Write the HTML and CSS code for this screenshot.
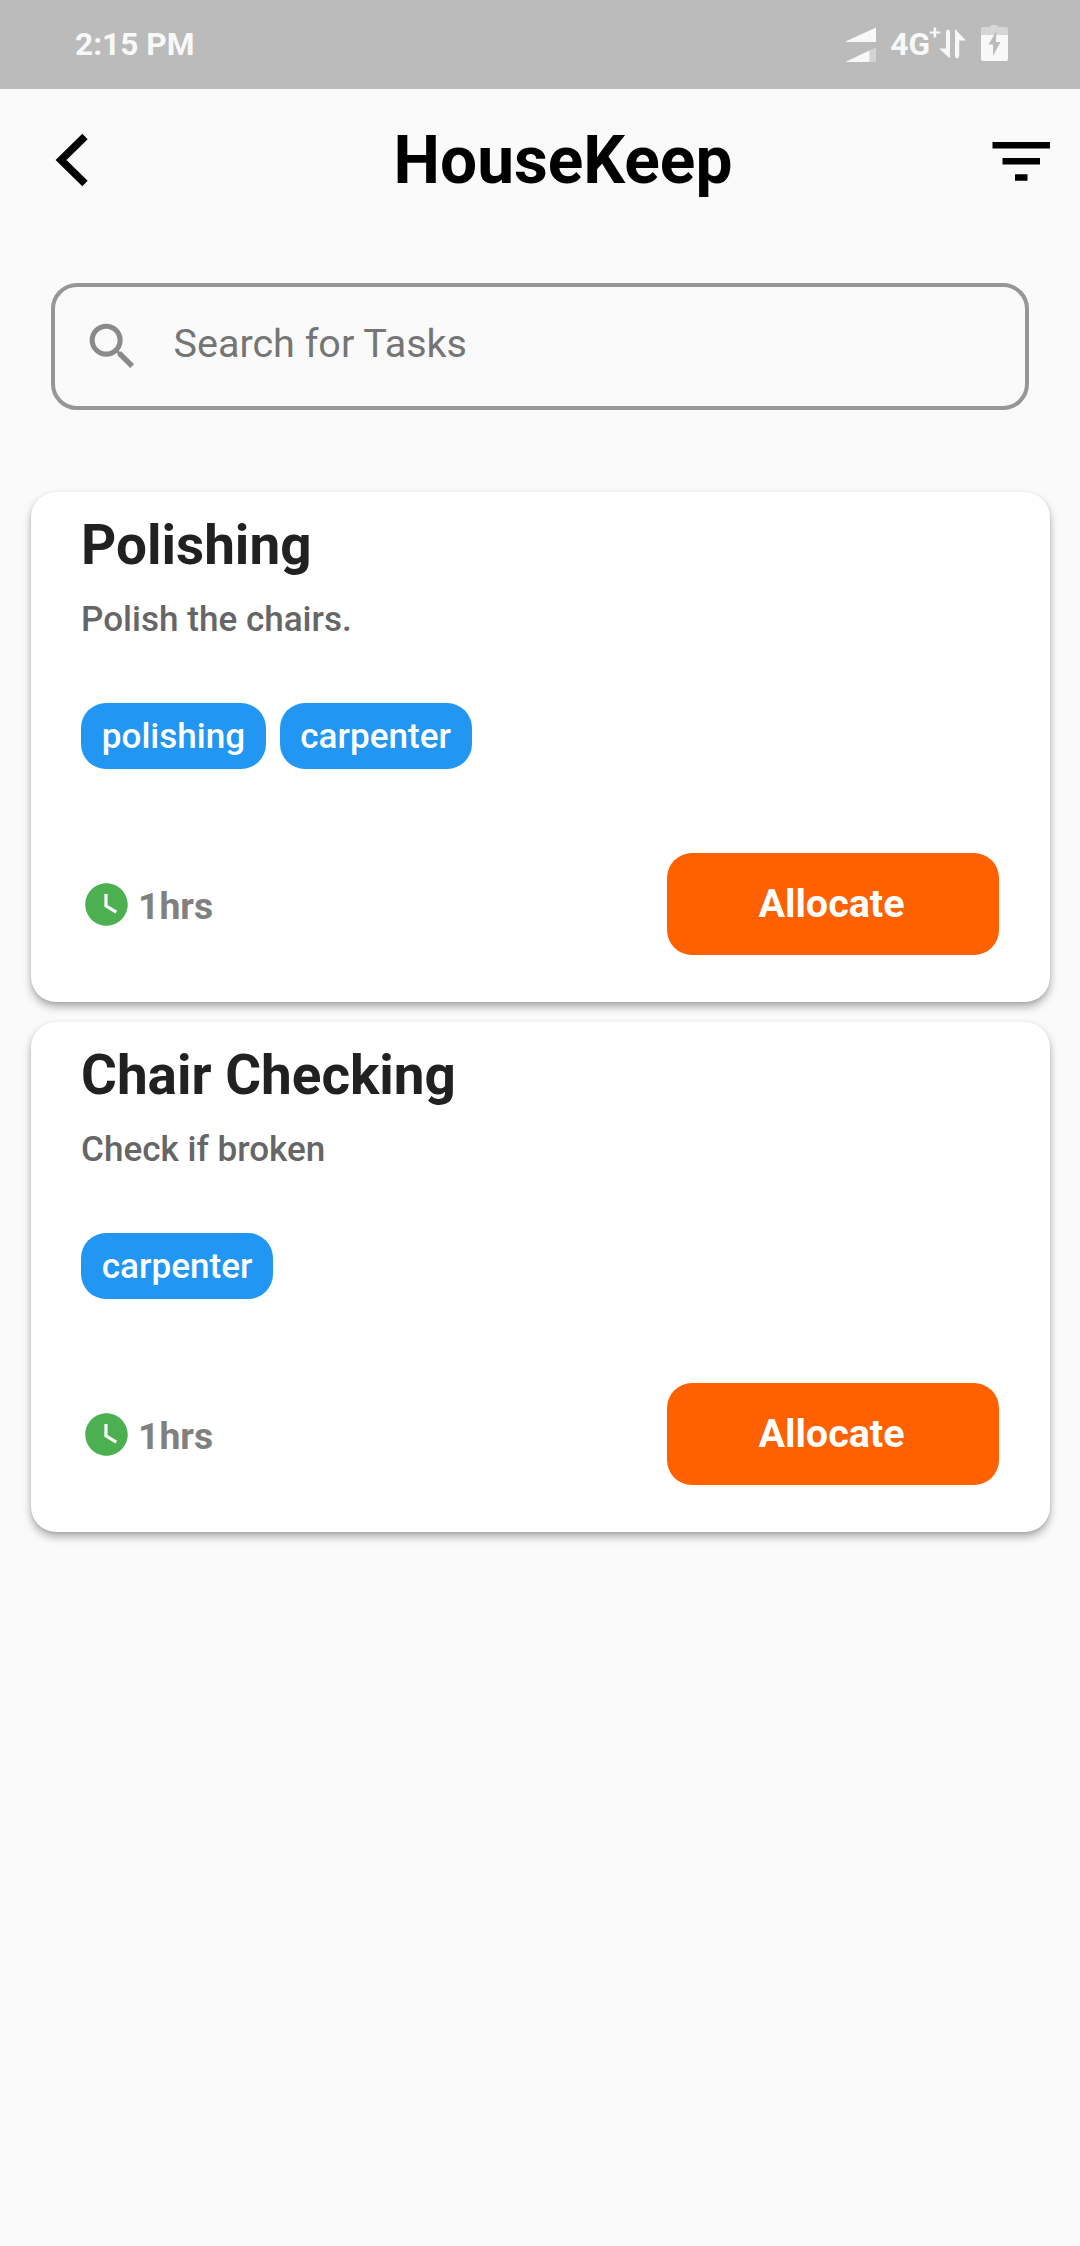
FILE: index.html
```html
<!DOCTYPE html>
<html lang="en">
<head>
<meta charset="utf-8">
<title>HouseKeep</title>
<link rel="stylesheet" href="styles.css">
</head>
<body>
<div class="status-bar">
  <span class="status-time">2:15 PM</span>
  <div class="status-icons">
    <svg class="signal" width="31" height="36" viewBox="0 0 31 36">
      <path d="M0 14.2 30 .5V15H0z"/>
      <path d="M0 34.7 30 20.5V35H0z" opacity=".4"/>
      <path d="M0 34.7 23.5 23.6V35H0z"/>
    </svg>
    <span class="network">4G</span>
    <svg class="data" width="38" height="36" viewBox="0 0 38 36">
      <path d="M4.600.5h2.600v4h4v2h-4v4H4.600v-4H.800v-2h3.800z"/>
      <path d="M17 5.500q0-3 2-3t2 3v26L10 21.500h7z"/>
      <path d="M26 2 37 13.500H30.200V28q0 3.500-2.100 3.500T26 28z"/>
    </svg>
    <svg class="battery" width="27" height="36" viewBox="0 0 27 36">
      <path d="M9 2q0-2 2-2h4q2 0 2 2h8q2 0 2 2v6H0V4q0-2 2-2z" opacity=".45"/>
      <path d="M0 10h27v24q0 2-2 2H2q-2 0-2-2z"/>
      <path class="bolt" d="M15.500 6 7.500 19.500H12V31L19.500 17H15z"/>
    </svg>
  </div>
</div>
<header class="app-bar">
  <svg class="back" width="34" height="54" viewBox="0 0 34 54"><path d="M30 3.500 6 27 30 50.500"/></svg>
  <h1 class="app-title">HouseKeep</h1>
  <svg class="filter" width="58" height="39" viewBox="0 0 58 39"><path d="M.5 0H58v6.600H.500zM10.500 16H48v6.600H10.500zM23 32.200h12.500v6.600H23z"/></svg>
</header>
<main class="content">
  <div class="search">
    <svg class="search-icon" width="61" height="61" viewBox="0 0 24 24"><path d="M15.500 14h-.79l-.28-.27A6.471 6.471 0 0 0 16 9.500 6.500 6.500 0 1 0 9.500 16c1.610 0 3.090-.59 4.230-1.570l.27.28v.79l5 4.990L20.490 19l-4.990-5zm-6 0C7.010 14 5 11.990 5 9.500S7.010 5 9.500 5 14 7.010 14 9.500 11.990 14 9.500 14z"/></svg>
    <span class="search-hint">Search for Tasks</span>
  </div>
  <section class="card">
    <h2 class="card-title">Polishing</h2>
    <p class="card-text">Polish the chairs.</p>
    <div class="chips"><span class="chip">polishing</span><span class="chip">carpenter</span></div>
    <div class="card-footer">
      <div class="duration">
        <svg width="51" height="51" viewBox="0 0 24 24"><path d="M12 2C6.500 2 2 6.500 2 12s4.500 10 10 10 10-4.500 10-10S17.500 2 12 2zm4.200 14.200L11 13V7h1.500v5.200l4.500 2.700-.8 1.300z"/></svg>
        <span class="hours">1hrs</span>
      </div>
      <button class="allocate">Allocate</button>
    </div>
  </section>
  <section class="card">
    <h2 class="card-title">Chair Checking</h2>
    <p class="card-text">Check if broken</p>
    <div class="chips"><span class="chip">carpenter</span></div>
    <div class="card-footer">
      <div class="duration">
        <svg width="51" height="51" viewBox="0 0 24 24"><path d="M12 2C6.500 2 2 6.500 2 12s4.500 10 10 10 10-4.500 10-10S17.500 2 12 2zm4.200 14.200L11 13V7h1.500v5.200l4.500 2.700-.8 1.300z"/></svg>
        <span class="hours">1hrs</span>
      </div>
      <button class="allocate">Allocate</button>
    </div>
  </section>
</main>
</body>
</html>
```
FILE: styles.css
```css
* { box-sizing: border-box; }
body {
  margin: 0;
  min-height: 2246px;
  background: #fafafa;
  font-family: Roboto, "Liberation Sans", sans-serif;
}
h1, h2, p { margin: 0; }
svg { display: block; flex: none; }

.status-bar {
  display: flex;
  align-items: center;
  justify-content: space-between;
  height: 89px;
  padding: 0 72px 0 75px;
  background: #bbb;
  color: #f8f8f8;
  fill: #f8f8f8;
  font-size: 31.700px;
  font-weight: 700;
  line-height: 38px;
}
.status-time { padding-top: 1px; }
.status-icons { display: flex; align-items: center; }
.network { margin-left: 13px; padding-top: 1px; }
.data { margin-left: -1px; }
.battery { margin-left: 14px; margin-top: -3px; }
.bolt { fill: #bbb; }

.app-bar {
  display: flex;
  align-items: center;
  height: 142px;
  padding: 0 30px 0 55px;
}
.back { fill: none; stroke: #000; stroke-width: 7.600px; }
.app-title {
  flex: 1;
  padding: 2px 0 0 45px;
  text-align: center;
  font-size: 65.800px;
  font-weight: 700;
  line-height: 78px;
  color: #000;
}
.filter { margin-top: 2px; }

.content {
  display: flex;
  flex-direction: column;
  gap: 20px;
  padding: 52px 30.500px 0;
}
.search {
  display: flex;
  align-items: center;
  gap: 31px;
  height: 127px;
  margin: 0 20.500px 62px;
  padding-left: 26.500px;
  border: 4px solid #969696;
  border-radius: 26px;
}
.search-icon { fill: #8a8a8a; }
.search-hint { font-size: 39.500px; line-height: 46px; color: #757575; padding-bottom: 6px; }

.card {
  height: 510px;
  padding: 20px 51px 0 50.500px;
  border-radius: 25px;
  background: #fff;
  box-shadow: 0 5px 8px rgba(0,0,0,.3), 0 1px 3px rgba(0,0,0,.1);
}
.card-title { font-size: 54.850px; font-weight: 700; line-height: 66px; color: #212121; }
.card-text { margin-top: 20px; font-size: 35.100px; font-weight: 500; line-height: 42px; color: #666; }
.chips { display: flex; gap: 13.500px; margin-top: 63px; }
.chip {
  height: 66px;
  padding: 0 20.800px;
  border-radius: 25px;
  background: #2196f3;
  color: #fff;
  font-size: 35.100px;
  font-weight: 500;
  line-height: 66px;
}
.card-footer {
  display: flex;
  align-items: center;
  justify-content: space-between;
  margin-top: 84px;
}
.duration { display: flex; align-items: center; gap: 6px; }
.duration svg { fill: #4caf50; }
.hours { padding-top: 4px; font-size: 37.300px; font-weight: 700; line-height: 44px; color: #808080; }
.allocate {
  width: 332px;
  height: 102px;
  padding: 0 2px 0 0;
  border: 0;
  border-radius: 25px;
  background: #ff6000;
  color: #fff;
  font: 700 39.500px/46px Roboto, "Liberation Sans", sans-serif;
}
```
